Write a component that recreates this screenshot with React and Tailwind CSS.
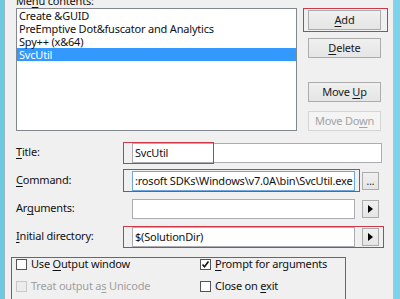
import React from 'react';

const font = { fontFamily: '"Noto Sans", "Open Sans", sans-serif' };

const U = ({ children }) => <span className="underline underline-offset-2">{children}</span>;

const Btn = ({ children, disabled }) => (
    <div
        className={
            'h-[20px] w-[73px] flex items-center justify-center border text-[11px] tracking-[-0.2px] ' +
            (disabled
                ? 'border-[#d5d5d5] bg-[#f4f4f4] text-[#a3a3a3]'
                : 'border-[#acacac] bg-gradient-to-b from-[#f0f0f0] to-[#e5e5e5] text-[#1a1a1a]')
        }
    >
        <span>{children}</span>
    </div>
);

const SmallBtn = ({ children }) => (
    <div className="h-[18px] w-[17px] flex items-center justify-center border border-[#acacac] bg-gradient-to-b from-[#f0f0f0] to-[#e5e5e5] text-[10px] text-[#1a1a1a]">
        {children}
    </div>
);

const Arrow = () => (
    <svg width="5" height="8" viewBox="0 0 5 8">
        <path d="M0 0 L5 4 L0 8 Z" fill="#000" />
    </svg>
);

const Field = ({ children, focused, className = '' }) => (
    <div
        className={
            'h-[20px] flex items-center bg-white border px-[2px] text-[11px] tracking-[-0.2px] text-[#111] overflow-hidden whitespace-nowrap ' +
            (focused ? 'border-[#6fa8e0] ' : 'border-[#abadb3] ') +
            className
        }
    >
        <span>{children}</span>
    </div>
);

const Check = ({ checked, disabled, children }) => (
    <div className="flex items-center gap-[4px] h-[14px]">
        <div
            className={
                'w-[11px] h-[11px] border flex items-center justify-center ' +
                (disabled ? 'border-[#c8c8c8] bg-[#ececec]' : 'border-[#555] bg-white')
            }
        >
            {checked && (
                <svg width="9" height="9" viewBox="0 0 9 9">
                    <path d="M1.5 4.5 L3.5 6.8 L7.5 1.5" stroke="#111" strokeWidth="1.6" fill="none" />
                </svg>
            )}
        </div>
        <span className={'text-[11px] tracking-[-0.2px] ' + (disabled ? 'text-[#a0a0a0]' : 'text-[#111]')}>
            {children}
        </span>
    </div>
);

const Row = ({ label, children }) => (
    <div className="flex items-start">
        <div className="w-[116px] text-[11px] tracking-[-0.2px] text-[#111] leading-[16px] pt-[1px]">{label}</div>
        <div className="flex-1 flex items-center">{children}</div>
    </div>
);

export default function App() {
    return (
        <div className="w-[400px] h-[299px] overflow-hidden flex bg-[#f0f0f0]" style={font}>
            <div className="w-[5px] h-full bg-[#6ccae0] border-r border-[#9fb9c4]" />
            <div className="relative flex-1 flex flex-col pl-[11px] pr-[9px]">
                {/* menu contents */}
                <div className="text-[11px] tracking-[-0.2px] leading-[14px] text-[#111] -mt-[6px]">
                    Me<U>n</U>u contents:
                </div>
                <div className="flex">
                    <div className="w-[281px] h-[123px] bg-white border border-[#828790] text-[11px] tracking-[-0.2px] leading-[13px] text-[#111]">
                        <div className="h-[13px] pl-[2px]">Create &amp;GUID</div>
                        <div className="h-[13px] pl-[2px]">PreEmptive Dot&amp;fuscator and Analytics</div>
                        <div className="h-[13px] pl-[2px]">Spy++ (x&amp;64)</div>
                        <div className="h-[13px] pl-[2px] bg-[#3399ff] text-white">SvcUtil</div>
                    </div>
                    <div className="ml-[11px] flex flex-col pt-[2px]">
                        <Btn>
                            <U>A</U>dd
                        </Btn>
                        <div className="mt-[8px]">
                            <Btn>
                                <U>D</U>elete
                            </Btn>
                        </div>
                        <div className="mt-[24px]">
                            <Btn>
                                Move <U>U</U>p
                            </Btn>
                        </div>
                        <div className="mt-[9px]">
                            <Btn disabled>
                                Move Do<U>w</U>n
                            </Btn>
                        </div>
                    </div>
                </div>

                {/* fields */}
                <div className="flex flex-col gap-[8px] mt-[12px]">
                    <Row
                        label={
                            <>
                                <U>T</U>itle:
                            </>
                        }
                    >
                        <Field className="w-[250px]">SvcUtil</Field>
                    </Row>
                    <Row
                        label={
                            <>
                                <U>C</U>ommand:
                            </>
                        }
                    >
                        <Field focused className="w-[223px]">
                            :rosoft SDKs\Windows\v7.0A\bin\SvcUtil.exe
                        </Field>
                        <div className="ml-[7px]">
                            <SmallBtn>...</SmallBtn>
                        </div>
                    </Row>
                    <Row
                        label={
                            <>
                                Ar<U>g</U>uments:
                            </>
                        }
                    >
                        <Field className="w-[223px]" />
                        <div className="ml-[7px]">
                            <SmallBtn>
                                <Arrow />
                            </SmallBtn>
                        </div>
                    </Row>
                    <Row
                        label={
                            <>
                                <U>I</U>nitial directory:
                            </>
                        }
                    >
                        <Field className="w-[223px]">$(SolutionDir)</Field>
                        <div className="ml-[7px]">
                            <SmallBtn>
                                <Arrow />
                            </SmallBtn>
                        </div>
                    </Row>
                </div>

                {/* options */}
                <div className="grid grid-cols-[184px_1fr] gap-y-[8px] mt-[10px]">
                    <Check>
                        Use <U>O</U>utput window
                    </Check>
                    <Check checked>
                        <U>P</U>rompt for arguments
                    </Check>
                    <Check disabled>
                        Treat output a<U>s</U> Unicode
                    </Check>
                    <Check>
                        Close on <U>e</U>xit
                    </Check>
                </div>

                {/* red annotation boxes */}
                <div className="absolute left-[298px] top-[8px] w-[85px] h-[24px] border border-[#cc3a4a]" />
                <div className="absolute left-[118px] top-[142px] w-[91px] h-[22px] border border-[#cc3a4a]" />
                <div className="absolute left-[118px] top-[169px] w-[237px] h-[23px] border border-[#cc3a4a]" />
                <div className="absolute left-[118px] top-[226px] w-[261px] h-[22px] border border-[#cc3a4a]" />
                <div className="absolute left-[6px] top-[257px] w-[335px] h-[50px] border border-[#cc3a4a]" />
            </div>
            <div className="w-[7px] h-full bg-[#7dd3e8] border-l border-[#a9c9d3]" />
        </div>
    );
}
